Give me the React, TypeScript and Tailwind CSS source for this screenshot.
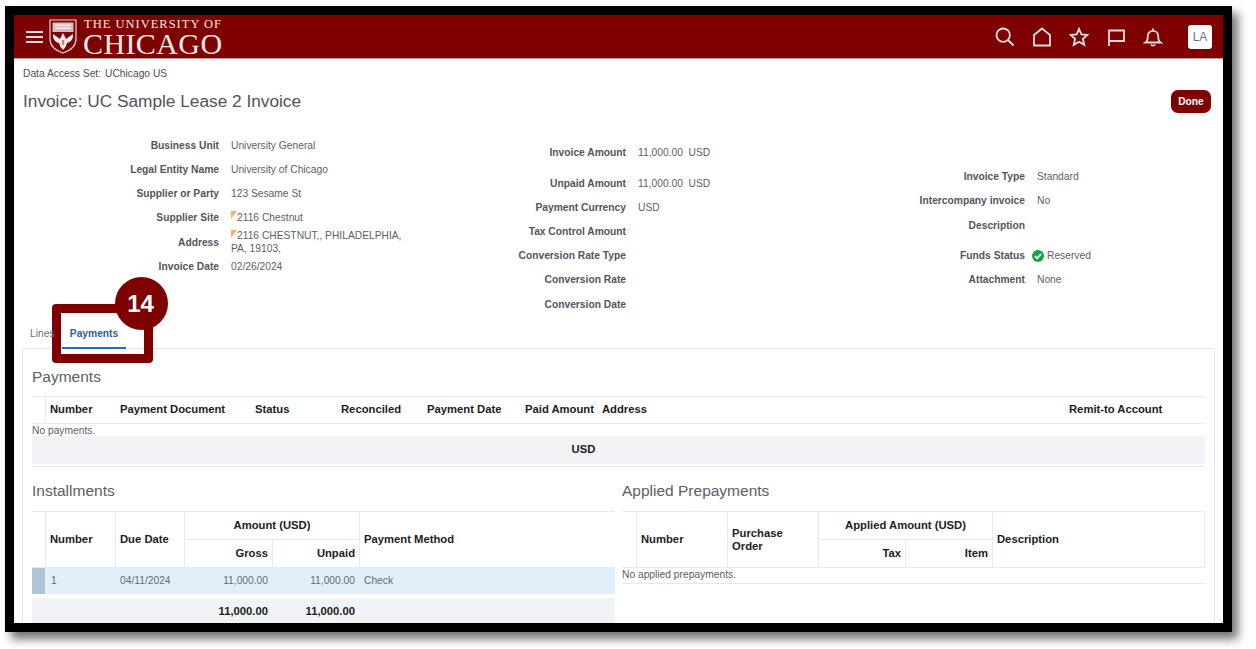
const F = "font-['Liberation_Sans',Arial,sans-serif]";

function Crest() {
  return (
    <svg width="28" height="35" viewBox="0 0 28 35" className="shrink-0">
      <path d="M1 1H27V20C27 28 20 32 14 34C8 32 1 28 1 20Z" fill="#7f0000" stroke="#e8d8d8" strokeWidth="1.2" />
      <path d="M3.5 3.5H24.5V13H3.5Z" fill="#d9bcbc" />
      <path d="M6 5.5H22V7H6ZM6 8.5H22V10H6Z" fill="#f4ecec" />
      <path d="M14 14L15.5 17L17 20L24 15C24.5 20 22 23 18 24L16.5 28L14 31L11.5 28L10 24C6 23 3.5 20 4 15L11 20L12.5 17Z" fill="#f6eeee" />
      <path d="M12.8 21H15.2V26H12.8Z" fill="#b58b8b" />
    </svg>
  );
}

function Icons() {
  const p = { fill: "none", stroke: "#e6dde0", strokeWidth: 1.8 };
  return (
    <div className="ml-auto flex items-center gap-[17px]">
      <svg width="20" height="20" viewBox="0 0 20 20" {...p}>
        <circle cx="8.2" cy="8.2" r="6.7" />
        <path d="M13 13L18.5 18.5" />
      </svg>
      <svg width="20" height="20" viewBox="0 0 20 20" {...p}>
        <path d="M2 18.5V8L10 1.5L18 8V18.5Z" />
      </svg>
      <svg width="20" height="20" viewBox="0 0 20 20" {...p}>
        <path d="M10 1.8L12.4 7.3L18.5 7.9L13.9 11.9L15.3 17.9L10 14.8L4.7 17.9L6.1 11.9L1.5 7.9L7.6 7.3Z" />
      </svg>
      <svg width="20" height="20" viewBox="0 0 20 20" {...p}>
        <path d="M3 19V3.5H18V14H3" />
      </svg>
      <svg width="20" height="20" viewBox="0 0 20 20" {...p}>
        <path d="M2.5 15.5C4.8 14 4.8 12 4.8 9C4.8 6 7 3.8 10 3.8C13 3.8 15.2 6 15.2 9C15.2 12 15.2 14 17.5 15.5Z" />
        <path d="M10 1.5V3.8M8 17.5C8.5 19 11.5 19 12 17.5" />
      </svg>
    </div>
  );
}

function Row({ label, w, h = "h-[24px]", children, extra = "" }: { label: string; w: string; h?: string; children?: React.ReactNode; extra?: string }) {
  return (
    <div className={`flex items-center ${h} ${extra}`}>
      <div className={`${w} shrink-0 text-right font-bold text-[#50565c]`}>{label}</div>
      <div className="ml-[12px] text-[#5a5f64]">{children}</div>
    </div>
  );
}

const Flag = () => <span className="inline-block w-0 h-0 border-t-[8px] border-t-[#f9ad74] border-r-[6px] border-r-transparent align-top mt-[1px]" />;

const hd = "flex items-center font-bold text-[#1c1c1c] text-[11.25px] px-[4px] border-l border-[#e6ebf0]";

export default function App() {
  return (
    <div className={`w-[1256px] h-[649px] bg-white overflow-hidden pl-[5px] pt-[6px] ${F}`}>
      <div className="w-[1227px] h-[626px] border-[9px] border-black bg-white overflow-hidden shadow-[6px_7px_9px_rgba(0,0,0,0.55)] relative text-[10.25px]">
        <header className="h-[44px] bg-[#7f0000] flex items-center relative border-b border-[#c9a0a0] pr-[11px]">
          <div className="absolute left-[12px] top-[16px] flex flex-col gap-[3px]">
            <span className="block w-[17px] h-[2px] bg-[#e6dde0]" />
            <span className="block w-[17px] h-[2px] bg-[#e6dde0]" />
            <span className="block w-[17px] h-[2px] bg-[#e6dde0]" />
          </div>
          <div className="ml-[35px]"><Crest /></div>
          <div className="ml-[7px] mt-[1px] font-['Liberation_Serif',serif] text-[#f3eaea] flex flex-col">
            <span className="text-[12.5px] leading-[12px] tracking-[1px] whitespace-nowrap">THE UNIVERSITY OF</span>
            <span className="text-[30px] leading-[27px] tracking-[0.4px] ml-[-1px] whitespace-nowrap">CHICAGO</span>
          </div>
          <Icons />
          <div className="ml-[25px] w-[24px] h-[24px] rounded-[3px] bg-white flex items-center justify-center text-[#777] text-[12px]">LA</div>
        </header>

        <div className="pl-[9px] h-[28px] flex items-center text-[#4a4f55] pt-[1px]">Data Access Set:<span className="ml-[4px]">UChicago US</span></div>
        <div className="relative mt-[-2px] h-[32px] pl-[9px] pt-[1px] flex items-center text-[17.25px] text-[#4f5459]">
          Invoice: UC Sample Lease 2 Invoice
          <button className="absolute left-[1157px] top-[5px] w-[40px] h-[23px] rounded-[7px] bg-[#7f0000] text-white font-bold text-[10.25px]">Done</button>
        </div>

        <div className="flex h-[182px] mt-[17px]">
          <div className="w-[400px] shrink-0">
            <Row label="Business Unit" w="w-[205px]">University General</Row>
            <Row label="Legal Entity Name" w="w-[205px]">University of Chicago</Row>
            <Row label="Supplier or Party" w="w-[205px]">123 Sesame St</Row>
            <Row label="Supplier Site" w="w-[205px]"><Flag />2116 Chestnut</Row>
            <Row label="Address" w="w-[205px]" h="h-[25px]"><div className="w-[180px] leading-[13px] mt-[-2px]"><Flag />2116 CHESTNUT,, PHILADELPHIA, PA, 19103,</div></Row>
            <Row label="Invoice Date" w="w-[205px]">02/26/2024</Row>
          </div>
          <div className="w-[400px] shrink-0 pt-[7px]">
            <Row label="Invoice Amount" w="w-[212px]">11,000.00&nbsp; USD</Row>
            <Row label="Unpaid Amount" w="w-[212px]" extra="mt-[7px]">11,000.00&nbsp; USD</Row>
            <Row label="Payment Currency" w="w-[212px]">USD</Row>
            <Row label="Tax Control Amount" w="w-[212px]" />
            <Row label="Conversion Rate Type" w="w-[212px]" />
            <Row label="Conversion Rate" w="w-[212px]" />
            <Row label="Conversion Date" w="w-[212px]" extra="mt-[1px]" />
          </div>
          <div className="flex-1 pt-[31px]">
            <Row label="Invoice Type" w="w-[211px]">Standard</Row>
            <Row label="Intercompany invoice" w="w-[211px]">No</Row>
            <Row label="Description" w="w-[211px]" extra="mt-[1px]" />
            <Row label="Funds Status" w="w-[211px]" extra="mt-[6px]">
              <div className="flex items-center ml-[-5px] gap-[3px]">
                <svg width="12" height="12" viewBox="0 0 12 12"><circle cx="6" cy="6" r="6" fill="#16a34a" /><path d="M3 6.2L5.2 8.3L9 4" fill="none" stroke="#fff" strokeWidth="1.6" /></svg>
                Reserved
              </div>
            </Row>
            <Row label="Attachment" w="w-[211px]">None</Row>
          </div>
        </div>

        <div className="h-[32px] pl-[8px] flex items-stretch relative z-10">
          <div className="px-[8px] pt-[4px] flex items-center text-[#6b7278]">Lines</div>
          <div className="ml-[-1px] w-[64px] pt-[4px] pl-[1px] flex items-center justify-center font-bold text-[#2c5f9e] border-b-[2px] border-[#1a6fc9] mb-[-1px]">Payments</div>
        </div>

        <div className="ml-[8px] w-[1193px] h-[300px] border border-[#e3e8ee] rounded-t-[3px] px-[9px] pt-[16px]">
          <div className="h-[24px] flex items-center text-[15.5px] text-[#5a6066]">Payments</div>
          <div className="mt-[7px] h-[28px] pb-[1px] border-y border-[#e6ebf0] grid grid-cols-[13px_71px_135px_86px_86px_87px_88px_467px_1fr]">
            <div />
            <div className={hd}>Number</div>
            <div className={`${hd} border-l-0`}>Payment Document</div>
            <div className={`${hd} border-l-0`}>Status</div>
            <div className={`${hd} border-l-0`}>Reconciled</div>
            <div className={`${hd} border-l-0`}>Payment Date</div>
            <div className={`${hd} border-l-0 justify-end whitespace-nowrap pl-0`}>Paid Amount</div>
            <div className={`${hd} border-l-0`}>Address</div>
            <div className={`${hd} border-l-0`}>Remit-to Account</div>
          </div>
          <div className="h-[12px] pt-[1px] flex items-center text-[#5a5f64]">No payments.</div>
          <div className="h-[28px] bg-[#f1f3f6] pr-[70px] pb-[2px] flex items-center justify-center font-bold text-[#1c1c1c] text-[11.25px]">USD</div>
          <div className="mt-[2px] border-b border-[#e3e8ee]" />
          <div className="flex gap-[7px] mt-[12px]">
            <div className="w-[583px] shrink-0">
              <div className="h-[24px] flex items-center text-[15.5px] text-[#5a6066]">Installments</div>
              <div className="mt-[8px] border-y border-[#e6ebf0] h-[57px] grid grid-cols-[13px_70px_69px_88px_87px_1fr] grid-rows-[28px_27px]">
                <div className="row-span-2" />
                <div className={`${hd} row-span-2`}>Number</div>
                <div className={`${hd} row-span-2`}>Due Date</div>
                <div className={`${hd} col-span-2 justify-center border-b`}>Amount (USD)</div>
                <div className={`${hd} row-span-2`}>Payment Method</div>
                <div className={`${hd} justify-end`}>Gross</div>
                <div className={`${hd} justify-end`}>Unpaid</div>
              </div>
              <div className="h-[26px] bg-[#e1effb] grid grid-cols-[13px_70px_69px_88px_87px_1fr] items-center text-[#666b70]">
                <div className="h-full bg-[#b0c4d6]" />
                <div className="pl-[6px]">1</div>
                <div className="pl-[5px]">04/11/2024</div>
                <div className="text-right pr-[4px]">11,000.00</div>
                <div className="text-right pr-[4px]">11,000.00</div>
                <div className="pl-[5px]">Check</div>
              </div>
              <div className="mt-[4px] h-[30px] pb-[4px] bg-[#f1f3f6] grid grid-cols-[13px_70px_69px_88px_87px_1fr] items-center font-bold text-[#1c1c1c] text-[11.25px]">
                <div /><div /><div />
                <div className="text-right pr-[4px]">11,000.00</div>
                <div className="text-right pr-[4px]">11,000.00</div>
                <div />
              </div>
            </div>
            <div className="w-[583px] shrink-0">
              <div className="h-[24px] flex items-center text-[15.5px] text-[#5a6066]">Applied Prepayments</div>
              <div className="mt-[8px] border-y border-[#e6ebf0] h-[57px] grid grid-cols-[14px_91px_91px_87px_87px_1fr] grid-rows-[28px_27px]">
                <div className="row-span-2" />
                <div className={`${hd} row-span-2`}>Number</div>
                <div className={`${hd} row-span-2 leading-[13px]`}>Purchase<br />Order</div>
                <div className={`${hd} col-span-2 justify-center border-b`}>Applied Amount (USD)</div>
                <div className={`${hd} row-span-2 border-r`}>Description</div>
                <div className={`${hd} justify-end`}>Tax</div>
                <div className={`${hd} justify-end`}>Item</div>
              </div>
              <div className="h-[16px] pb-[2px] flex items-center text-[#5a5f64] border-b border-[#e3e8ee]">No applied prepayments.</div>
            </div>
          </div>
        </div>

        <div className="absolute left-[38px] top-[289px] w-[101px] h-[59px] border-[9px] border-[#7f0000] rounded-[4px]" />
        <div className="absolute left-[101px] top-[262px] w-[53px] h-[53px] pr-[2px] rounded-full bg-[#7f0000] flex items-center justify-center text-white font-bold text-[24px]">14</div>
      </div>
    </div>
  );
}
